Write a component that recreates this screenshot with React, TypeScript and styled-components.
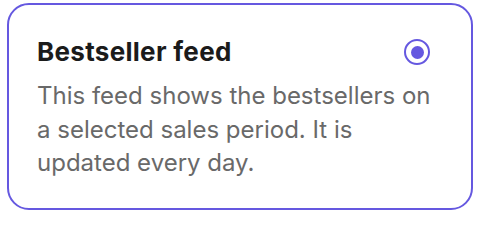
import styled, { createGlobalStyle } from "styled-components";

const GlobalStyle = createGlobalStyle`
  html, body {
    margin: 0;
    padding: 0;
    background: #ffffff;
  }
  body {
    font-family: Inter, "Noto Sans", sans-serif;
  }
`;

const Page = styled.div`
  width: 480px;
  height: 214px;
  padding: 3px 7px 4px 7px;
  box-sizing: border-box;
`;

const Card = styled.label`
  display: flex;
  flex-direction: column;
  height: 100%;
  box-sizing: border-box;
  padding: 31px 16px 0 28px;
  border: 2px solid #6558e0;
  border-radius: 22px;
  background: #ffffff;
  cursor: pointer;
`;

const Header = styled.div`
  display: flex;
  align-items: flex-start;
  justify-content: space-between;
`;

const Title = styled.h3`
  margin: 0;
  font-size: 26px;
  line-height: 32px;
  font-weight: 700;
  letter-spacing: 0.3px;
  color: #1b1b1b;
`;

const Description = styled.p`
  margin: 11px 23px 0 0;
  font-size: 24px;
  line-height: 33.5px;
  font-weight: 400;
  color: #696969;
`;

const Radio = styled.span<{ $checked: boolean }>`
  flex: none;
  width: 26px;
  height: 26px;
  margin-top: 3px;
  margin-right: 25px;
  box-sizing: border-box;
  border-radius: 50%;
  border: 2px solid #6558e0;
  display: flex;
  align-items: center;
  justify-content: center;

  &::after {
    content: "";
    width: 13px;
    height: 13px;
    border-radius: 50%;
    background: ${(props) => (props.$checked ? "#6558e0" : "transparent")};
  }
`;

const App = () => {
  return (
    <>
      <GlobalStyle />
      <Page>
        <Card>
          <Header>
            <Title>Bestseller feed</Title>
            <Radio $checked={true} />
          </Header>
          <Description>
            This feed shows the bestsellers on a selected sales period. It is
            updated every day.
          </Description>
        </Card>
      </Page>
    </>
  );
};

export default App;
